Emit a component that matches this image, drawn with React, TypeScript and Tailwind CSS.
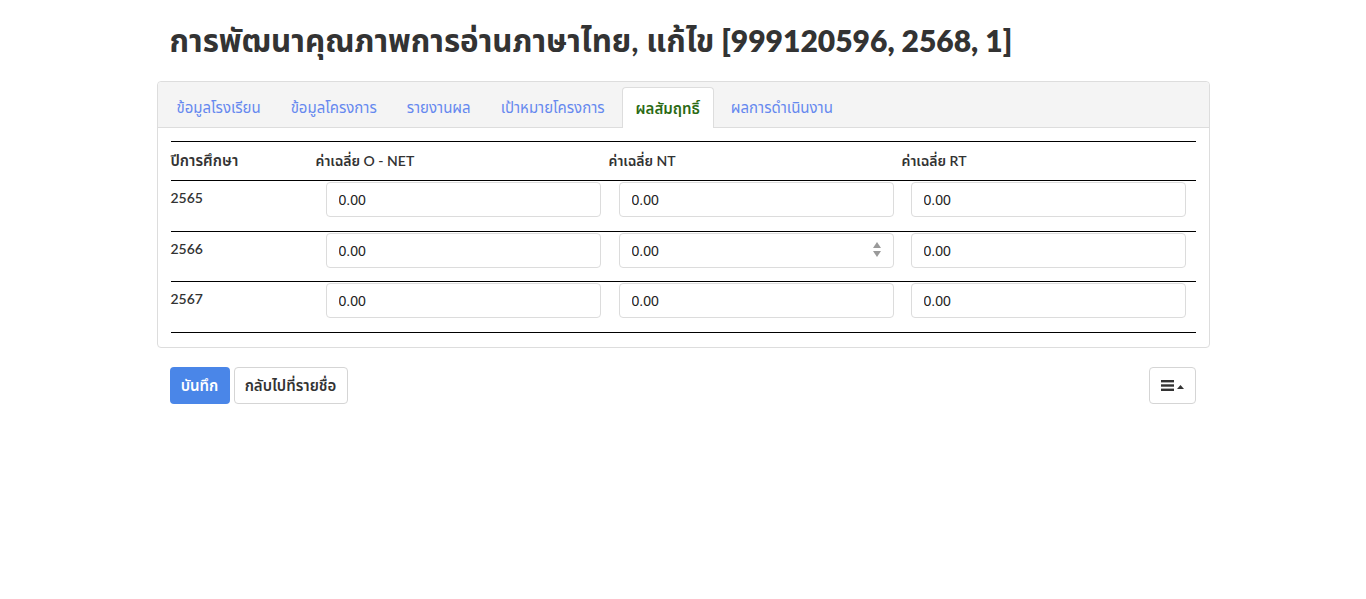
import React from "react";

const tabs = [
  "ข้อมูลโรงเรียน",
  "ข้อมูลโครงการ",
  "รายงานผล",
  "เป้าหมายโครงการ",
  "ผลสัมฤทธิ์",
  "ผลการดำเนินงาน",
];

const years = ["2565", "2566", "2567"];

function Field({ spinner }: { spinner?: boolean }) {
  return (
    <div className="relative">
      <input
        readOnly
        value="0.00"
        className="block h-[35px] w-full rounded-[4px] border border-[#dcdcdc] bg-white pl-[12px] text-[14px] text-[#222] outline-none"
        style={{ fontFamily: '"Liberation Sans", Arial, sans-serif' }}
      />
      {spinner && (
        <div className="absolute right-[13px] top-[9px] flex flex-col gap-[3px]">
          <svg width="8" height="6" viewBox="0 0 8 6">
            <path d="M4 0 L8 6 L0 6 Z" fill="#9a9a9a" />
          </svg>
          <svg width="8" height="6" viewBox="0 0 8 6">
            <path d="M0 0 L8 0 L4 6 Z" fill="#9a9a9a" />
          </svg>
        </div>
      )}
    </div>
  );
}

export default function App() {
  return (
    <div
      className="min-h-[599px] bg-white text-[#333]"
      style={{ fontFamily: 'Lato, "Noto Sans", "Noto Sans Thai", sans-serif' }}
    >
      <div className="mx-auto w-[1053px]">
        <div className="pt-[20px]">
          <h1 className="mb-[21px] ml-[13px] h-[40px] overflow-visible whitespace-nowrap text-[30px] font-bold leading-[40px] text-[#333]">
            <span className="text-[31.3px]">การพัฒนาคุณภาพการอ่านภาษาไทย, แก้ไข</span>
            <span className="text-[30px] font-extrabold"> [999120596, 2568, 1]</span>
          </h1>
        </div>

        <div className="rounded-[4px] border border-[#dddddd]">
          <div className="flex h-[46px] items-end rounded-t-[4px] border-b border-[#dddddd] bg-[#f4f4f4] pl-[4px]">
            {tabs.map((t, i) =>
              i === 4 ? (
                <div
                  key={t}
                  className="mb-[-1px] ml-[2px] mr-[2px] flex h-[41px] items-center rounded-t-[4px] border border-b-0 border-[#dddddd] bg-white px-[13px] text-[15px] font-semibold text-[#2b6a12]"
                >
                  {t}
                </div>
              ) : (
                <div
                  key={t}
                  className="flex h-[40px] items-center px-[15px] text-[15px] text-[#6588ef]"
                >
                  {t}
                </div>
              )
            )}
          </div>

          <div className="px-[13px] pb-[14px] pt-[13px]">
            <div className="border-b border-black">
              <div className="grid grid-cols-[145px_293px_293px_294px] border-t border-black">
                <div className="pb-[9px] pt-[8px] text-[15px] font-semibold leading-[21px]">
                  ปีการศึกษา
                </div>
                <div className="pb-[9px] pt-[8px] text-[14px] font-semibold leading-[21px]">
                  ค่าเฉลี่ย O - NET
                </div>
                <div className="pb-[9px] pt-[8px] text-[14px] font-semibold leading-[21px]">
                  ค่าเฉลี่ย NT
                </div>
                <div className="pb-[9px] pt-[8px] text-[14px] font-semibold leading-[21px]">
                  ค่าเฉลี่ย RT
                </div>
              </div>
              {years.map((y, r) => (
                <div
                  key={y}
                  className="grid grid-cols-[145px_293px_293px_294px] border-t border-black"
                >
                  <div className="pt-[7px] text-[14px] font-semibold leading-[20px]">
                    {y}
                  </div>
                  <div className={`${r === 1 ? "pb-[13px]" : "pb-[14px]"} pl-[10px] pr-[8px] pt-[1px]`}>
                    <Field />
                  </div>
                  <div className={`${r === 1 ? "pb-[13px]" : "pb-[14px]"} pl-[10px] pr-[8px] pt-[1px]`}>
                    <Field spinner={r === 1} />
                  </div>
                  <div className={`${r === 1 ? "pb-[13px]" : "pb-[14px]"} pl-[9px] pr-[10px] pt-[1px]`}>
                    <Field />
                  </div>
                </div>
              ))}
            </div>
          </div>
        </div>

        <div className="mt-[19px] flex items-center justify-between pl-[13px] pr-[14px]">
          <div className="flex gap-[4px]">
            <button className="h-[37px] w-[60px] rounded-[4px] bg-[#4a86e8] text-[15px] font-semibold text-white">
              บันทึก
            </button>
            <button className="h-[37px] w-[114px] rounded-[4px] border border-[#d5d5d5] bg-white text-[15px] font-semibold text-[#333]">
              กลับไปที่รายชื่อ
            </button>
          </div>
          <button className="flex h-[37px] w-[47px] items-center justify-center gap-[3px] rounded-[4px] border border-[#d5d5d5] bg-white">
            <svg width="13" height="11" viewBox="0 0 13 11">
              <rect x="0" y="0" width="13" height="2.4" fill="#333" />
              <rect x="0" y="4.3" width="13" height="2.4" fill="#333" />
              <rect x="0" y="8.6" width="13" height="2.4" fill="#333" />
            </svg>
            <svg width="7" height="4" viewBox="0 0 7 4" className="mt-[2px]">
              <path d="M3.5 0 L7 4 L0 4 Z" fill="#333" />
            </svg>
          </button>
        </div>
      </div>
    </div>
  );
}
